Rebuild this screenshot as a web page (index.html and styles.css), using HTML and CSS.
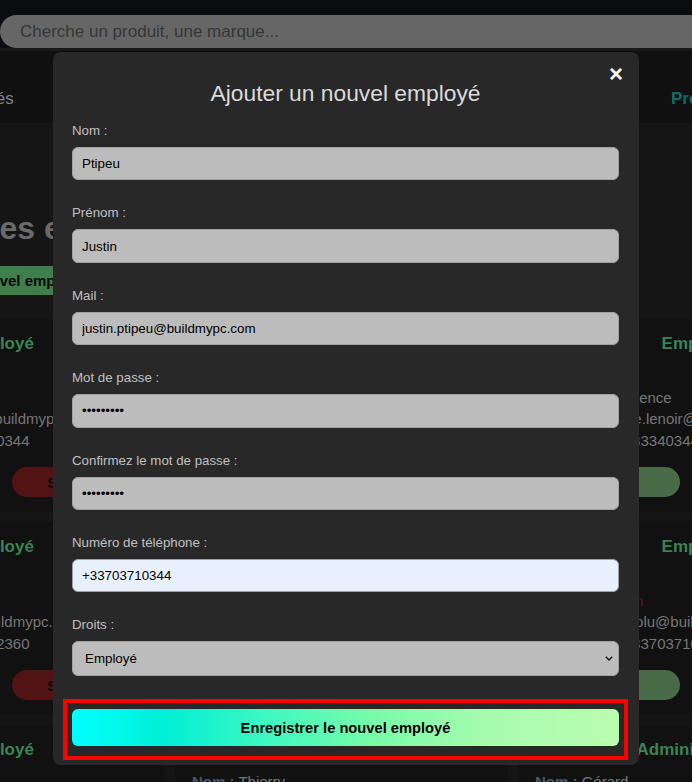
FILE: index.html
```html
<!DOCTYPE html>
<html lang="fr">
<head>
<meta charset="utf-8">
<title>Gestion des employés</title>
<link rel="stylesheet" href="styles.css">
</head>
<body>
<header class="topbar">
  <input class="search" type="text" placeholder="Cherche un produit, une marque...">
</header>
<nav class="nav">
  <a class="nav-item nav-first">Employés</a>
  <a class="nav-item">Commandes</a>
  <a class="nav-item">Statistiques</a>
  <a class="nav-item nav-active">Produits</a>
</nav>
<main class="page">
  <div class="content">
    <h1 class="title">Gestion des employés</h1>
    <button class="add-btn" type="button">Ajouter un nouvel employé</button>
    <div class="grid">
      <div class="card">
        <h3>Employé</h3>
        <div class="info">
          <div><b>Nom :</b> Bonnard</div>
          <div><b>Prénom :</b> Jean</div>
          <div><b>Mail :</b> jean.bonnard@buildmypc.com</div>
          <div><b>Téléphone :</b> +3361230344</div>
        </div>
        <div class="actions"><button class="pill edit">Modifier</button><button class="pill del">Supprimer</button></div>
      </div>
      <div class="card">
        <h3>Employé</h3>
        <div class="info">
          <div><b>Nom :</b> Martin</div>
          <div><b>Prénom :</b> Sophie</div>
          <div><b>Mail :</b> sophie.martin@buildmypc.com</div>
          <div><b>Téléphone :</b> +33698765432</div>
        </div>
        <div class="actions"><button class="pill edit">Modifier</button><button class="pill del">Supprimer</button></div>
      </div>
      <div class="card">
        <h3>Employé</h3>
        <div class="info">
          <div><b>Nom :</b> Lenoir</div>
          <div><b>Prénom :</b> Clémence</div>
          <div><b>Mail :</b> clemence.lenoir@buildmypc.com</div>
          <div><b>Téléphone :</b> +33340344032</div>
        </div>
        <div class="actions"><button class="pill edit">Modifier</button><button class="pill del">Supprimer</button></div>
      </div>
      <div class="card">
        <h3>Employé</h3>
        <div class="info">
          <div><b>Nom :</b> Martin</div>
          <div><b>Prénom :</b> Paul</div>
          <div><b>Mail :</b> paul.martin@buildmypc.com</div>
          <div><b>Téléphone :</b> +3361232360</div>
        </div>
        <div class="actions"><button class="pill edit">Modifier</button><button class="pill del">Supprimer</button></div>
      </div>
      <div class="card">
        <h3>Employé</h3>
        <div class="info">
          <div><b>Nom :</b> Bernard</div>
          <div><b>Prénom :</b> Lucie</div>
          <div><b>Mail :</b> lucie.bernard@buildmypc.com</div>
          <div><b>Téléphone :</b> +33645781290</div>
        </div>
        <div class="actions"><button class="pill edit">Modifier</button><button class="pill del">Supprimer</button></div>
      </div>
      <div class="card">
        <h3>Employé</h3>
        <div class="info">
          <div><b>Nom :</b> Plu</div>
          <div><b>Prénom :</b> <span class="warn">Julien</span></div>
          <div><b>Mail :</b> mathieu.plu@buildmypc.com</div>
          <div><b>Téléphone :</b> +33703710344</div>
        </div>
        <div class="actions"><button class="pill edit">Modifier</button><button class="pill del">Supprimer</button></div>
      </div>
      <div class="card">
        <h3>Employé</h3>
        <div class="info">
          <div><b>Nom :</b> Roux</div>
          <div><b>Prénom :</b> Hugo</div>
          <div><b>Mail :</b> hugo.roux@buildmypc.com</div>
          <div><b>Téléphone :</b> +33611223344</div>
        </div>
      </div>
      <div class="card">
        <h3>Employé</h3>
        <div class="info">
          <div><b>Nom :</b> Thierry</div>
          <div><b>Prénom :</b> Marc</div>
        </div>
      </div>
      <div class="card">
        <h3>Administrateur</h3>
        <div class="info">
          <div><b>Nom :</b> Gérard</div>
          <div><b>Prénom :</b> Alain</div>
        </div>
      </div>
    </div>
  </div>
</main>

<div class="overlay">
  <div class="modal">
    <button class="close" type="button" aria-label="Fermer">×</button>
    <h2 class="modal-title">Ajouter un nouvel employé</h2>
    <form class="form">
      <div class="field">
        <label for="nom">Nom :</label>
        <input id="nom" type="text" value="Ptipeu">
      </div>
      <div class="field">
        <label for="prenom">Prénom :</label>
        <input id="prenom" type="text" value="Justin">
      </div>
      <div class="field">
        <label for="mail">Mail :</label>
        <input id="mail" type="text" value="justin.ptipeu@buildmypc.com">
      </div>
      <div class="field">
        <label for="mdp">Mot de passe :</label>
        <input id="mdp" type="password" value="motdepass">
      </div>
      <div class="field">
        <label for="mdp2">Confirmez le mot de passe :</label>
        <input id="mdp2" type="password" value="motdepass">
      </div>
      <div class="field">
        <label for="tel">Numéro de téléphone :</label>
        <input id="tel" class="autofill" type="text" value="+33703710344">
      </div>
      <div class="field field-last">
        <label for="droits">Droits :</label>
        <select id="droits">
          <option>Employé</option>
          <option>Administrateur</option>
        </select>
      </div>
      <div class="submit-wrap">
        <button class="submit" type="button">Enregistrer le nouvel employé</button>
      </div>
    </form>
  </div>
</div>
</body>
</html>
```
FILE: styles.css
```css
html, body {
  margin: 0;
  padding: 0;
}
body {
  background: #151515;
  font-family: "Liberation Sans", Arial, sans-serif;
  overflow: hidden;
  height: 782px;
}

/* top bar */
.topbar {
  height: 48px;
  box-sizing: border-box;
  padding-top: 15px;
  background: #0b0c0f;
}
.search {
  display: block;
  width: 780px;
  height: 33px;
  box-sizing: border-box;
  margin: 0;
  border: none;
  border-radius: 17px;
  background: #666666;
  padding: 0 20px;
  font: 17px "Liberation Sans", Arial, sans-serif;
  color: #333;
  outline: none;
}
.search::placeholder {
  color: #363636;
}

/* nav */
.nav {
  height: 75px;
  box-sizing: border-box;
  background: #101010;
  border-top: 3px solid #191919;
  display: flex;
  align-items: flex-end;
  justify-content: space-between;
  padding-bottom: 14px;
  font-size: 17px;
  line-height: 20px;
}
.nav-item {
  color: #858585;
}
.nav-first {
  margin-left: -61px;
}
.nav-active {
  color: #0b6e69;
  font-weight: bold;
  margin-right: -48px;
}

/* page */
.content {
  width: 1044px;
  margin-left: -168px;
  padding-top: 85px;
}
.title {
  margin: 0;
  padding-left: 20px;
  font-size: 32px;
  line-height: 40px;
  font-weight: bold;
  color: #6a6a6a;
}
.add-btn {
  display: block;
  margin: 18px 0 0 17px;
  height: 29px;
  padding: 0 44px;
  border: none;
  border-radius: 4px;
  background: linear-gradient(90deg, #3a8549 0%, #3f7e4b 70%, #4b6d50 100%);
  font: bold 15px "Liberation Sans", Arial, sans-serif;
  color: #0a0a0a;
}
.grid {
  margin-top: 24px;
  display: grid;
  grid-template-columns: 333px 333px 358px;
  gap: 10px;
}
.card {
  height: 193px;
  box-sizing: border-box;
  background: #111111;
  border-radius: 8px;
  padding: 14px 17px 15px;
}
.card h3 {
  margin: 0;
  font-size: 17px;
  line-height: 22px;
  text-align: center;
  color: #3a8356;
}
.info {
  margin-top: 10px;
  font-size: 15px;
  line-height: 21.5px;
  color: #767676;
  white-space: nowrap;
}
.info b {
  color: #4c5764;
}
.warn {
  color: #6e1515;
}
.actions {
  display: flex;
  gap: 18px;
  margin-top: 16px;
}
.pill {
  flex: 0 0 145px;
  width: 145px;
  height: 30px;
  border: none;
  border-radius: 15px;
  font: bold 15px "Liberation Sans", Arial, sans-serif;
  color: #0b0b0b;
  padding: 0;
}
.pill.edit {
  background: #4a6b48;
}
.pill.del {
  background: #511313;
}

/* modal */
.overlay {
  position: fixed;
  inset: 0;
  display: flex;
  justify-content: center;
  align-items: flex-start;
  padding-top: 52px;
}
.modal {
  position: relative;
  width: 586px;
  box-sizing: border-box;
  background: #282828;
  border-radius: 8px;
  padding: 28px 20px 5px 19px;
}
.close {
  position: absolute;
  top: 10px;
  right: 16px;
  width: 14px;
  padding: 0;
  border: none;
  background: none;
  color: #ffffff;
  font: bold 24px/24px "Liberation Sans", Arial, sans-serif;
  text-align: center;
}
.modal-title {
  margin: 0 0 17px;
  text-align: center;
  font-size: 22.8px;
  line-height: 26px;
  font-weight: normal;
  color: #dadada;
}
.form {
  margin: 0;
}
.field {
  margin-bottom: 25px;
}
.field-last {
  margin-bottom: 23px;
}
.field label {
  display: block;
  font-size: 13.3px;
  line-height: 16px;
  margin-bottom: 8px;
  color: #c0c0c0;
}
.field input,
.field select {
  display: block;
  width: 100%;
  box-sizing: border-box;
  margin: 0;
  border: 1px solid #a2a2a2;
  border-radius: 6px;
  background-color: #bcbcbc;
  font: 13.33px "Liberation Sans", Arial, sans-serif;
  color: #000;
  outline: none;
}
.field input {
  height: 33.4px;
  padding: 0 9px;
}
.field select {
  height: 34.7px;
  padding: 0 12px;
  appearance: none;
  -webkit-appearance: none;
  background-image: url("data:image/svg+xml,%3Csvg xmlns='http://www.w3.org/2000/svg' width='8' height='5' viewBox='0 0 8 5'%3E%3Cpath d='M0.8 0.8 L4 4 L7.2 0.8' fill='none' stroke='%23111' stroke-width='1.4'/%3E%3C/svg%3E");
  background-repeat: no-repeat;
  background-position: right 5px center;
  background-size: 8px 5px;
}
.field input.autofill {
  background-color: #e8f0fe;
}
.submit-wrap {
  margin: 0 -9px;
  border: 4px solid #ff0000;
  padding: 6px 5px 10px;
}
.submit {
  display: block;
  width: 100%;
  height: 37px;
  border: none;
  border-radius: 6px;
  background: linear-gradient(90deg, #00ffff 0%, #00f8e8 9%, #00efd6 17%, #3ef8c2 35%, #78fba9 55%, #a6fcae 75%, #bbfdb1 100%);
  font: bold 14.7px "Liberation Sans", Arial, sans-serif;
  color: #000;
}
```
